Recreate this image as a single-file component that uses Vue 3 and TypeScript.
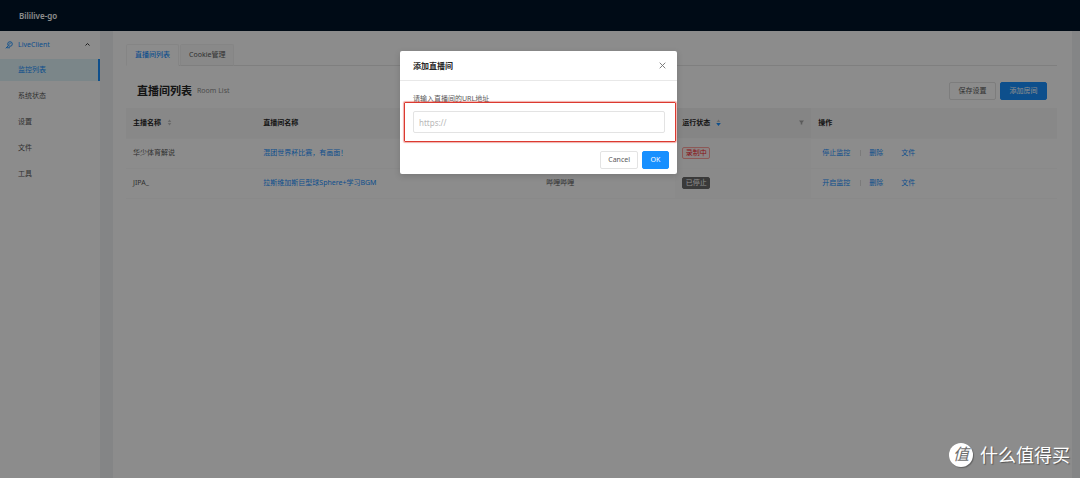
<script setup lang="ts">
import { ref } from 'vue'

interface Room {
  host: string
  name: string
  platform: string
  status: string
  running: boolean
  toggle: string
}

const menu: string[] = ['监控列表', '系统状态', '设置', '文件', '工具']
const active = ref<string>('监控列表')
const url = ref<string>('')

const rooms: Room[] = [
  { host: '华少体育解说', name: '混团世界杯比赛，有画面！', platform: '', status: '录制中', running: true, toggle: '停止监控' },
  { host: 'JIPA_', name: '拉斯维加斯巨型球Sphere+学习BGM', platform: '哔哩哔哩', status: '已停止', running: false, toggle: '开启监控' },
]
</script>

<template>
  <div class="app">
    <header class="topbar">Bililive-go</header>
    <div class="body">
      <nav class="sidebar">
        <button class="group" type="button">
          <svg class="group-icon" viewBox="0 0 16 16" fill="none" stroke="currentColor" stroke-width="1.8">
            <circle cx="10" cy="6" r="4.6" />
            <path d="M6.6 9.4 1.5 14.5M7.5 7.5l4-4M3 13.5h7" />
          </svg>
          <span>LiveClient</span>
          <svg class="caret" viewBox="0 0 10 6" fill="none" stroke="currentColor" stroke-width="2"><path d="M1 5l4-4 4 4" /></svg>
        </button>
        <a
          v-for="item in menu"
          :key="item"
          href="#"
          class="item"
          :class="{ selected: item === active }"
          @click.prevent="active = item"
        >{{ item }}</a>
      </nav>
      <main class="content">
        <div class="tabs">
          <button class="tab current" type="button">直播间列表</button>
          <button class="tab" type="button">Cookie管理</button>
        </div>
        <div class="heading">
          <h1>直播间列表</h1>
          <span class="sub">Room List</span>
          <button class="btn" type="button">保存设置</button>
          <button class="btn primary" type="button">添加房间</button>
        </div>
        <table class="rooms">
          <colgroup>
            <col class="c-host" /><col class="c-name" /><col class="c-platform" /><col class="c-status" /><col class="c-action" />
          </colgroup>
          <thead>
            <tr>
              <th>
                <span>主播名称</span>
                <svg class="sorter" viewBox="0 0 8 12"><path class="off" d="M4 1l3 4H1z" /><path class="off" d="M4 11l3-4H1z" /></svg>
              </th>
              <th>直播间名称</th>
              <th></th>
              <th class="sorted">
                <div class="th-row">
                  <span>运行状态</span>
                  <svg class="sorter" viewBox="0 0 8 12"><path class="off" d="M4 1l3 4H1z" /><path class="on" d="M4 12l4-5H0z" /></svg>
                  <svg class="filter" viewBox="0 0 10 10"><path d="M0 1h10L6.5 5.5V9h-3V5.5z" /></svg>
                </div>
              </th>
              <th>操作</th>
            </tr>
          </thead>
          <tbody>
            <tr v-for="room in rooms" :key="room.host">
              <td>{{ room.host }}</td>
              <td><a href="#">{{ room.name }}</a></td>
              <td>{{ room.platform }}</td>
              <td class="sorted"><span class="tag" :class="{ live: room.running }">{{ room.status }}</span></td>
              <td>
                <div class="actions">
                  <a href="#" class="split">{{ room.toggle }}</a>
                  <a href="#">删除</a>
                  <a href="#">文件</a>
                </div>
              </td>
            </tr>
          </tbody>
        </table>
      </main>
    </div>

    <div class="mask">
      <section class="modal" role="dialog" aria-labelledby="dialog-title">
        <div class="modal-head">
          <h2 id="dialog-title">添加直播间</h2>
          <button class="close" type="button" aria-label="Close">
            <svg viewBox="0 0 10 10" fill="none" stroke="currentColor" stroke-width="1.3"><path d="M1 1l8 8M9 1L1 9" /></svg>
          </button>
        </div>
        <div class="modal-body">
          <label for="room-url">请输入直播间的URL地址</label>
          <div class="field">
            <input id="room-url" v-model="url" type="text" placeholder="https://" />
          </div>
        </div>
        <div class="modal-foot">
          <button class="btn" type="button">Cancel</button>
          <button class="btn primary" type="button">OK</button>
        </div>
      </section>
    </div>

    <div class="brand">
      <span class="brand-mark"><i>值</i></span>
      <span>什么值得买</span>
    </div>
  </div>
</template>

<style>
body {
  margin: 0;
}
</style>

<style scoped>
.app {
  position: relative;
  display: flex;
  flex-direction: column;
  min-height: 100vh;
  font-family: "Noto Sans", "Noto Sans CJK SC", sans-serif;
  font-size: 7px;
  line-height: 12px;
  color: #595959;
}
.app * {
  box-sizing: border-box;
}
button,
input {
  font: inherit;
  color: inherit;
  margin: 0;
}
a {
  color: #1890ff;
  text-decoration: none;
}
.topbar {
  height: 31px;
  padding-left: 19px;
  background: #001529;
  color: #fff;
  font-size: 8px;
  font-weight: 600;
  line-height: 31px;
}
.body {
  display: flex;
  flex: 1;
  background: #f0f2f5;
}
.sidebar {
  display: flex;
  flex-direction: column;
  gap: 4px;
  width: 100px;
  background: #fff;
}
.group {
  display: flex;
  align-items: center;
  height: 24px;
  padding: 3px 10px 0 5px;
  border: 0;
  background: none;
  color: #1890ff;
}
.group-icon {
  width: 8px;
  height: 8px;
  margin-right: 5px;
}
.caret {
  width: 5px;
  height: 3px;
  margin-left: auto;
  color: #333;
}
.item {
  height: 22px;
  padding-left: 18px;
  line-height: 22px;
  color: #595959;
}
.item.selected {
  background: #e0f5fa;
  border-right: 2px solid #1890ff;
  color: #1890ff;
}
.content {
  flex: 1;
  min-width: 0;
  margin: 0 8px 0 13px;
  padding: 13px 15px 0 13px;
  background: #fff;
}
.tabs {
  display: flex;
  gap: 1px;
  border-bottom: 1px solid #e8e8e8;
}
.tab {
  height: 22px;
  margin-bottom: -1px;
  padding: 0 8px;
  border: 1px solid #f2f2f2;
  border-bottom-color: #e8e8e8;
  border-radius: 2px 2px 0 0;
  background: #fafafa;
}
.tab.current {
  border-bottom-color: #fff;
  background: #fff;
  color: #1890ff;
  font-weight: 500;
}
.heading {
  display: flex;
  align-items: center;
  gap: 4px;
  height: 42px;
  padding: 8px 10px 0 11px;
}
h1 {
  margin: 0;
  font-size: 11px;
  font-weight: 700;
  color: #262626;
}
.sub {
  margin: 0 auto 0 1px;
  color: #8c8c8c;
}
.btn {
  height: 18px;
  padding: 0 8px;
  border: 1px solid #e3e3e3;
  border-radius: 2px;
  background: #fff;
  line-height: 16px;
}
.btn.primary {
  border-color: #1890ff;
  background: #1890ff;
  color: #fff;
}
.heading .btn {
  width: 47px;
}
.rooms {
  width: 100%;
  table-layout: fixed;
  border-collapse: collapse;
}
.c-host { width: 14%; }
.c-name { width: 30.4%; }
.c-platform { width: 14.6%; }
.c-status { width: 14.6%; }
.c-action { width: 26.4%; }
th,
td {
  height: 30px;
  padding: 0 7px;
  text-align: left;
  vertical-align: middle;
  border-bottom: 1px solid #fafafa;
}
th {
  background: #f7f7f7;
  color: #262626;
  font-weight: 700;
}
th.sorted {
  background: #f2f2f2;
}
td.sorted {
  background: #fcfcfc;
}
.th-row {
  display: flex;
  align-items: center;
}
.sorter {
  width: 5px;
  height: 7px;
  margin-left: 6px;
  vertical-align: middle;
}
.off {
  fill: #bfbfbf;
}
.on {
  fill: #1890ff;
}
.filter {
  width: 5px;
  height: 5px;
  margin-left: auto;
  fill: #a6a6a6;
}
.tag {
  display: inline-block;
  width: 28px;
  border: 1px solid #6b6b6b;
  border-radius: 2px;
  background: #6b6b6b;
  color: #fff;
  line-height: 10px;
  text-align: center;
  vertical-align: middle;
}
.tag.live {
  border-color: #ffa39e;
  background: #fff1f0;
  color: #f5222d;
}
.actions {
  display: grid;
  grid-template-columns: 47px 32px auto;
  padding-left: 4px;
}
.split {
  position: relative;
}
.split::after {
  content: "";
  position: absolute;
  top: 3px;
  right: 8px;
  height: 6px;
  border-right: 1px solid #e0e0e0;
}
.mask {
  position: absolute;
  inset: 0;
  display: flex;
  align-items: flex-start;
  justify-content: center;
  padding: 51px 3px 0 0;
  background: rgba(0, 0, 0, 0.45);
}
.modal {
  width: 277px;
  border-radius: 2px;
  background: #fff;
  box-shadow: 0 2px 6px rgba(0, 0, 0, 0.15);
}
.modal-head {
  display: flex;
  align-items: center;
  justify-content: space-between;
  height: 30px;
  padding: 0 11px 0 13px;
  border-bottom: 1px solid #e8e8e8;
}
h2 {
  margin: 0;
  font-size: 8px;
  font-weight: 700;
  color: #262626;
}
.close {
  display: flex;
  padding: 0;
  border: 0;
  background: none;
  color: #737373;
}
.close svg {
  width: 7px;
  height: 7px;
}
.modal-body {
  padding: 12px 12px 0 13px;
}
label {
  display: block;
  height: 18px;
}
.field {
  position: relative;
}
.field::after {
  content: "";
  position: absolute;
  inset: -9px -11px -9px -9px;
  border: 1px solid #dc3a30;
  border-radius: 1px;
  box-shadow: 0 0 1px 1px rgba(220, 58, 48, 0.4);
  pointer-events: none;
}
input {
  display: block;
  width: 100%;
  height: 22px;
  padding: 0 5px;
  border: 1px solid #e3e3e3;
  border-radius: 2px;
  background: #fff;
  font-size: 8px;
}
input::placeholder {
  color: #b8b8b8;
  opacity: 1;
}
.modal-foot {
  display: flex;
  justify-content: flex-end;
  gap: 4px;
  padding: 18px 8px 5px;
}
.modal-foot .btn {
  min-width: 27px;
  padding: 0 7px;
}
.brand {
  position: absolute;
  right: 10px;
  bottom: 10px;
  display: flex;
  align-items: center;
  gap: 7px;
  color: #fff;
  font-size: 18px;
  line-height: 26px;
  text-shadow: 1px 1px 1px rgba(0, 0, 0, 0.4);
}
.brand-mark {
  width: 24px;
  height: 24px;
  border-radius: 50%;
  background: #fff;
  color: #6e6e6e;
  font-size: 16px;
  line-height: 23px;
  text-align: center;
  text-shadow: none;
  box-shadow: 1px 1px 1px rgba(0, 0, 0, 0.3);
}
</style>
